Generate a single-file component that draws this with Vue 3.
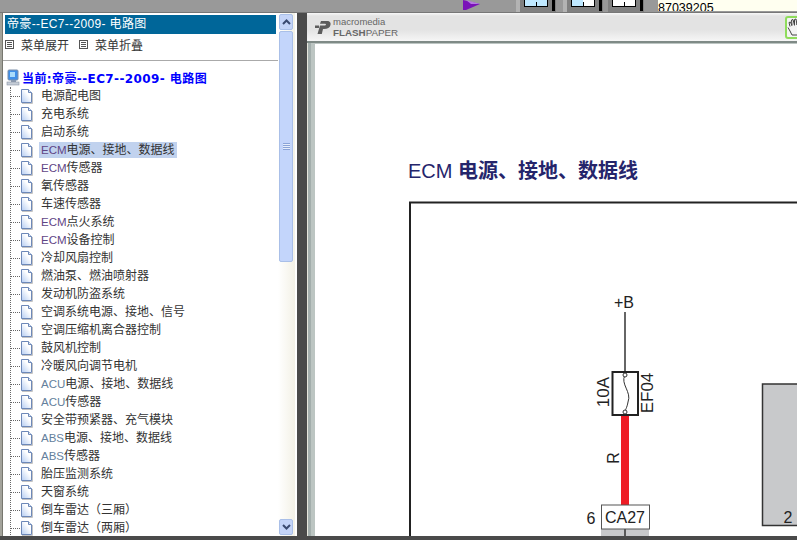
<script setup>
const items = [
	{ text: "电源配电图" },
	{ text: "充电系统" },
	{ text: "启动系统" },
	{ pre: "ECM", text: "电源、接地、数据线", selected: true },
	{ pre: "ECM", text: "传感器" },
	{ text: "氧传感器" },
	{ text: "车速传感器" },
	{ pre: "ECM", text: "点火系统" },
	{ pre: "ECM", text: "设备控制" },
	{ text: "冷却风扇控制" },
	{ text: "燃油泵、燃油喷射器" },
	{ text: "发动机防盗系统" },
	{ text: "空调系统电源、接地、信号" },
	{ text: "空调压缩机离合器控制" },
	{ text: "鼓风机控制" },
	{ text: "冷暖风向调节电机" },
	{ pre: "ACU", text: "电源、接地、数据线" },
	{ pre: "ACU", text: "传感器" },
	{ text: "安全带预紧器、充气模块" },
	{ pre: "ABS", text: "电源、接地、数据线" },
	{ pre: "ABS", text: "传感器" },
	{ text: "胎压监测系统" },
	{ text: "天窗系统" },
	{ text: "倒车雷达（三厢）" },
	{ text: "倒车雷达（两厢）" },
];
</script>

<template>
	<div class="screen">
		<div class="top-strip">
			<svg class="arrow" width="17" height="11" viewBox="0 0 17 11">
				<polygon points="0,0 17,4 3,10 0,10" fill="#7a12b8" />
				<polygon points="3,0 17,4 8,4" fill="#b57ae0" />
			</svg>
			<div class="tool-btn first">
				<span class="pane blue"><i></i></span>
				<b></b>
			</div>
			<div class="tool-btn">
				<span class="pane half"><i></i></span>
				<b></b>
			</div>
			<div class="tool-btn third">
				<span class="pane"><i></i></span>
				<b></b>
			</div>
			<div class="phone">87039205</div>
		</div>

		<div class="main">
			<div class="left">
				<div class="left-inner">
					<div class="title">帝豪--EC7--2009- 电路图</div>
					<div class="menu">
						<span class="box-icon"></span><span class="menu-text">菜单展开</span>
						<span class="box-icon second"></span><span class="menu-text">菜单折叠</span>
					</div>
					<div class="divider"></div>
					<div class="current">
						<svg width="14" height="17" viewBox="0 0 14 17">
							<rect x="2" y="1" width="10" height="10" rx="1" fill="#3f8fe8" stroke="#7a8ea8" />
							<rect x="4" y="3" width="5" height="5" fill="#a9dcfb" />
							<rect x="5" y="11" width="5" height="2" fill="#8a9ab0" />
							<rect x="1" y="13" width="12" height="3" fill="#c6ced8" stroke="#8a94a4" stroke-width="0.6" />
						</svg>
						<span>当前:帝豪--EC7--2009- 电路图</span>
					</div>
					<ul class="tree">
						<li v-for="item in items" :key="item.pre + item.text" class="row">
							<span class="dots"></span>
							<svg class="file" width="13" height="15" viewBox="0 0 13 15">
								<defs>
									<linearGradient id="fileFill" x1="0" y1="1" x2="1" y2="0">
										<stop offset="0" stop-color="#b4ccf2" />
										<stop offset="0.65" stop-color="#ffffff" />
									</linearGradient>
								</defs>
								<path d="M2 14.500H12.500V4" fill="none" stroke="#c4c4c4" />
								<path d="M1.500 .5H8.500L11.500 3.500V13.500H1.500Z" fill="url(#fileFill)" stroke="#6d88b8" />
								<path d="M8.500 .5V3.500H11.500" fill="#dfe9f8" stroke="#6d88b8" />
							</svg>
							<span class="label" :class="{ selected: item.selected }">
								<span v-if="item.pre" class="pre" :class="item.pre">{{ item.pre }}</span>{{ item.text }}
							</span>
						</li>
					</ul>
				</div>
				<div class="scrollbar">
					<div class="sb-btn">
						<svg width="9" height="6" viewBox="0 0 9 6"><path d="M1 5L4.500 1.500L8 5" fill="none" stroke="#3a4a70" stroke-width="2" /></svg>
					</div>
					<div class="thumb"><span class="grip"></span></div>
					<div class="track"></div>
					<div class="sb-btn">
						<svg width="9" height="6" viewBox="0 0 9 6"><path d="M1 1L4.500 4.500L8 1" fill="none" stroke="#3a4a70" stroke-width="2" /></svg>
					</div>
				</div>
			</div>

			<div class="viewer">
				<div class="toolbar">
					<svg class="logo" width="16" height="15" viewBox="0 0 16 15">
						<path d="M6 1H12C15 1 16 3 15.500 5C15 7.500 12.500 9 9 9H8L6.800 14H2.500L5 5.500H9C10.500 5.500 11 5 11 4.500C11 4 10.500 3.800 9.500 3.800H5Z" fill="#5c5c5c" />
						<rect x="0" y="5.500" width="4" height="2.500" fill="#5c5c5c" />
					</svg>
					<div class="brand">
						<div class="mm">macromedia</div>
						<div class="fp"><b>FLASH</b>PAPER</div>
					</div>
					<div class="hand">
						<svg width="12" height="18" viewBox="0 0 12 18">
							<path d="M1 9.500L3 13L5 17H12M3 8.500L2 4.500L3.500 4L5 8M5 7L4.500 2L6 1.500L7.500 7.500M7.500 7L7.500 1.500L9 1L10 7M10 7L11 2.500H12" fill="none" stroke="#444" stroke-width="1" />
						</svg>
					</div>
				</div>
				<div class="doc-wrap">
					<div class="doc">
						<h2 class="doc-title">ECM <b>电源、接地、数据线</b></h2>
						<svg class="diagram" width="389" height="341" viewBox="408 195 389 341">
							<path d="M410 536V202.500H797" fill="none" stroke="#222" stroke-width="2" />
							<text x="624" y="308" class="d-text" text-anchor="middle" font-size="16">+B</text>
							<line x1="625" y1="312" x2="625" y2="372" stroke="#333" stroke-width="1.500" />
							<rect x="612.500" y="372" width="25.500" height="43" fill="#fff" stroke="#222" stroke-width="2" />
							<path d="M625 375C620 384 632 392 628 402C627 408 625 410 625 412" fill="none" stroke="#333" stroke-width="1" />
							<circle cx="625" cy="375" r="2" fill="#fff" stroke="#333" />
							<circle cx="625" cy="412" r="2" fill="#fff" stroke="#333" />
							<rect x="621" y="416" width="8" height="89" fill="#ee1c25" />
							<text class="d-text" font-size="17" text-anchor="middle" transform="translate(609 392) rotate(-90)">10A</text>
							<text class="d-text" font-size="17" text-anchor="middle" transform="translate(653 393) rotate(-90)">EF04</text>
							<text class="d-text" font-size="16" text-anchor="middle" transform="translate(619 458) rotate(-90)">R</text>
							<rect x="601" y="529" width="48" height="8" fill="#c9cacc" />
							<line x1="625" y1="529" x2="625" y2="537" stroke="#333" stroke-width="1.500" />
							<rect x="601.500" y="505" width="48" height="24" fill="#fff" stroke="#555" />
							<text x="625" y="523" class="d-text" text-anchor="middle" font-size="16">CA27</text>
							<text x="591" y="524" class="d-text" text-anchor="middle" font-size="16">6</text>
							<rect x="762.500" y="384" width="50" height="141.500" fill="#c8c9cb" stroke="#333" stroke-width="1.500" />
							<text x="788" y="523" class="d-text" text-anchor="middle" font-size="16">2</text>
						</svg>
					</div>
				</div>
			</div>
		</div>
		<div class="bottom"></div>
	</div>
</template>

<style scoped>
.screen {
	width: 797px;
	height: 540px;
	overflow: hidden;
	display: flex;
	flex-direction: column;
	background: #4a4a4a;
	font-family: "Liberation Sans", "Noto Sans CJK SC", sans-serif;
	font-size: 12px;
	color: #333;
}
.top-strip {
	height: 12px;
	flex: none;
	background: #999;
	border-bottom: 1px solid #777;
	display: flex;
	overflow: hidden;
}
.arrow {
	margin-left: 463px;
}
.tool-btn {
	width: 32px;
	height: 12px;
	background: #808080;
	border-left: 4px solid #b3b3b3;
	margin-left: 7px;
	display: flex;
	padding-left: 4px;
	box-sizing: content-box;
}
.tool-btn.first {
	margin-left: 36px;
}
.tool-btn.third {
	margin-left: 1px;
	border-left-color: #999;
}
.pane {
	width: 24px;
	height: 7px;
	background: #fff;
	border: 1px solid #000;
	border-top: none;
	box-sizing: border-box;
	position: relative;
}
.pane.blue {
	background: #bfe8ff;
}
.pane.half {
	background: linear-gradient(90deg, #bfe8ff 50%, #fff 50%);
}
.pane i {
	position: absolute;
	left: 11px;
	top: 2px;
	width: 1px;
	height: 4px;
	background: #000;
}
.tool-btn b {
	width: 3px;
	height: 11px;
	margin-left: 4px;
	background: #000;
}
.phone {
	margin-left: 14px;
	flex: 1;
	height: 11px;
	background: #fffff0;
	color: #000;
	font-size: 12.500px;
	line-height: 17px;
	overflow: hidden;
}
.main {
	flex: 1;
	min-height: 0;
	display: flex;
}
.left {
	width: 297px;
	flex: none;
	display: flex;
	background: #fff;
	border-left: 2px solid #a3a39b;
	box-sizing: border-box;
	overflow: hidden;
	height: 523px;
}
.left-inner {
	width: 276px;
	flex: none;
	padding-top: 2px;
	border-left: 1px solid #77776f;
	box-sizing: border-box;
	overflow: hidden;
}
.title {
	margin: 0 2px 0 2px;
	height: 19px;
	line-height: 19px;
	padding-left: 2px;
	background: #006699;
	color: #fff;
	white-space: pre;
	font-size: 12px;
	letter-spacing: 0.35px;
}
.menu {
	height: 20px;
	display: flex;
	align-items: center;
	padding-left: 2px;
	margin-bottom: 6px;
}
.box-icon {
	width: 9px;
	height: 9px;
	border: 1px solid #555;
	box-sizing: border-box;
	background: repeating-linear-gradient(180deg, #fff 0 1px, #555 1px 2px);
	background-clip: content-box;
	padding: 1px;
}
.box-icon.second {
	margin-left: 10px;
}
.menu-text {
	margin-left: 7px;
}
.divider {
	height: 1px;
	background: #aaa;
}
.current {
	margin-top: 7px;
	height: 19px;
	display: flex;
	align-items: center;
	gap: 2px;
	padding-left: 3px;
	color: #0000ff;
	font-family: "DejaVu Sans", "Noto Sans CJK SC", sans-serif;
	font-size: 12px;
	font-weight: bold;
	letter-spacing: 0.4px;
	white-space: pre;
}
.tree {
	list-style: none;
	margin: 0 0 0 7px;
	padding: 0;
	border-left: 1px dotted #666;
}
.row {
	height: 18px;
	display: flex;
	align-items: center;
	white-space: nowrap;
}
.dots {
	width: 9px;
	border-top: 1px dotted #666;
	flex: none;
}
.file {
	flex: none;
}
.label {
	margin-left: 6px;
	padding: 0 2px;
	height: 16px;
	line-height: 16px;
}
.label.selected {
	background: #c1d2ee;
}
.pre {
	font-size: 11.500px;
}
.pre.ECM {
	color: #5f4585;
}
.pre.ACU,
.pre.ABS {
	color: #64809c;
}
.scrollbar {
	width: 17px;
	flex: none;
	background: linear-gradient(90deg, #fff, #f3f1e6);
	padding: 1px 2px 1px 1px;
	box-sizing: border-box;
	display: flex;
	flex-direction: column;
	gap: 1px;
}
.sb-btn {
	height: 16px;
	flex: none;
	background: #c4d4f8;
	border: 1px solid #a9bfe8;
	border-radius: 2px;
	box-sizing: border-box;
	display: flex;
	align-items: center;
	justify-content: center;
}
.thumb {
	height: 231px;
	flex: none;
	background: #c3d5fb;
	border: 1px solid #a9bfe8;
	border-radius: 2px;
	box-sizing: border-box;
	display: flex;
	align-items: center;
	justify-content: center;
}
.grip {
	width: 7px;
	height: 7px;
	background: repeating-linear-gradient(180deg, #8aa4d8 0 1px, #e6eefc 1px 2px);
}
.track {
	flex: 1;
}
.viewer {
	margin-left: 10px;
	flex: 1;
	min-width: 0;
	height: 523px;
	display: flex;
	flex-direction: column;
	background: #fff;
}
.toolbar {
	height: 28px;
	flex: none;
	position: relative;
	display: flex;
	align-items: center;
	padding-left: 8px;
	background: linear-gradient(180deg, #f8f8f8 0, #e3e3e3 3px, #e3e3e3 60%, #f6f6f6 100%);
	border-bottom: 2px solid #7f8a86;
	box-sizing: content-box;
}
.logo {
	flex: none;
}
.brand {
	margin-left: 2px;
	color: #666;
}
.mm {
	font-size: 9.500px;
	line-height: 10px;
}
.fp {
	font-size: 9.800px;
	line-height: 11px;
	white-space: nowrap;
}
.hand {
	position: absolute;
	left: 478px;
	top: 3px;
	width: 22px;
	height: 23px;
	border: 2px solid #8fdc5c;
	border-radius: 3px;
	background: #f4f4f4;
	box-sizing: border-box;
}
.doc-wrap {
	flex: 1;
	min-height: 0;
	display: flex;
	background: linear-gradient(90deg, #e6e6dc 0 1px, #a3aeac 1px 4px, #bcc5c2 4px);
	padding: 1px 0 0 8px;
}
.doc {
	flex: 1;
	min-width: 0;
	background: #fff;
	padding: 114px 0 0 93px;
	overflow: hidden;
}
.doc-title {
	margin: 0 0 11px;
	font-size: 20px;
	line-height: 26px;
	font-weight: normal;
	color: #25256b;
	white-space: pre;
}
.doc-title b {
	font-weight: bold;
}
.diagram {
	display: block;
}
.d-text {
	font-family: "Liberation Sans", sans-serif;
	fill: #222;
}
.bottom {
	height: 4px;
	flex: none;
}
</style>
